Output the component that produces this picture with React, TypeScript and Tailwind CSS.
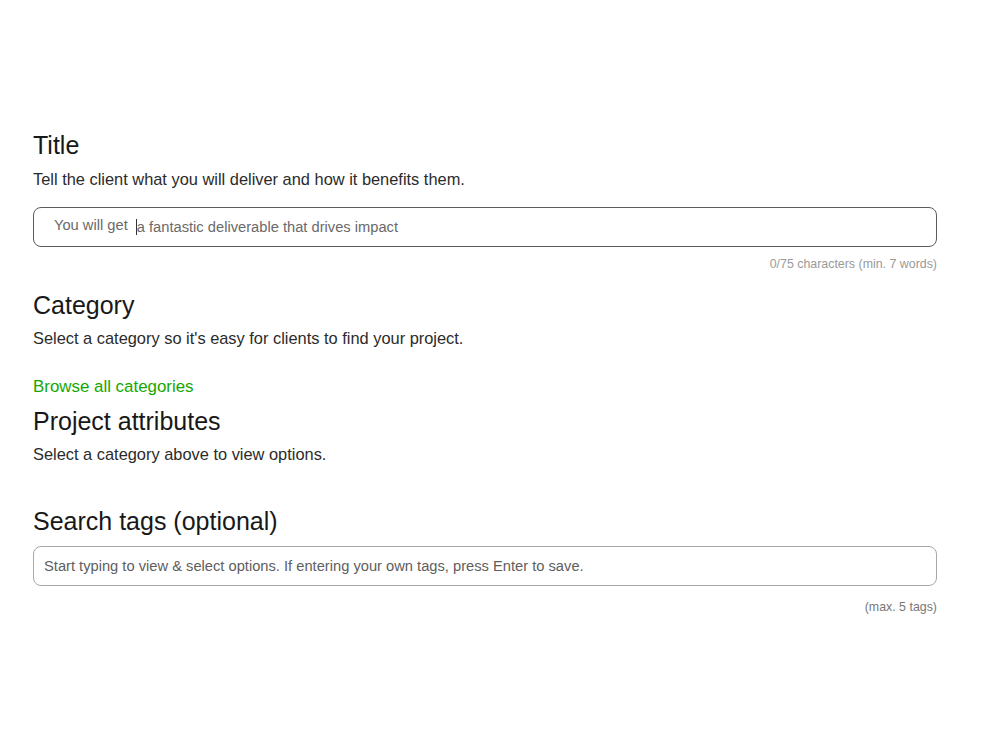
export default function App() {
  return (
    <main className="min-h-screen bg-white text-[#1f1f1f] font-['Liberation_Sans',Arial,sans-serif]">
      <div className="ml-[33px] mr-[63px] pt-[129px] flex flex-col">
        {/* Title */}
        <h2 className="text-[25px] leading-[32px] font-normal text-[#181818]">Title</h2>
        <p className="mt-[6px] text-[16.4px] leading-[24px] text-[#2b2b2b]">
          Tell the client what you will deliver and how it benefits them.
        </p>
        <div className="mt-[16px] h-[40px] rounded-[8px] border border-[#5c5c5c] flex items-center pl-[20px]">
          <span className="text-[14.7px] text-[#6a6a6a] -mt-[4px]">You will get</span>
          <span className="ml-[8px] w-px h-[16px] bg-[#333]" />
          <span className="text-[14.7px] text-[#6a6a6a]">a fantastic deliverable that drives impact</span>
        </div>
        <p className="mt-[9px] text-right text-[12.4px] leading-[16px] text-[#9a9a9a]">
          0/75 characters (min. 7 words)
        </p>

        {/* Category */}
        <h2 className="mt-[17px] text-[25px] leading-[32px] text-[#181818]">Category</h2>
        <p className="mt-[5px] text-[16.4px] leading-[24px] text-[#2b2b2b]">
          Select a category so it's easy for clients to find your project.
        </p>
        <a className="mt-[25px] text-[16.9px] leading-[24px] text-[#14a800] w-fit cursor-pointer">
          Browse all categories
        </a>

        {/* Attributes */}
        <h2 className="mt-[6px] text-[25px] leading-[32px] text-[#181818]">Project attributes</h2>
        <p className="mt-[5px] text-[16.4px] leading-[24px] text-[#2b2b2b]">
          Select a category above to view options.
        </p>

        {/* Tags */}
        <h2 className="mt-[39px] text-[25px] leading-[32px] text-[#181818]">Search tags (optional)</h2>
        <div className="mt-[9px] h-[40px] rounded-[8px] border border-[#a8a8a8] flex items-center px-[10px]">
          <span className="text-[14.7px] text-[#5e5e5e]">
            Start typing to view &amp; select options. If entering your own tags, press Enter to save.
          </span>
        </div>
        <p className="mt-[13px] text-right text-[12.4px] leading-[16px] text-[#777]">(max. 5 tags)</p>
      </div>
    </main>
  );
}
